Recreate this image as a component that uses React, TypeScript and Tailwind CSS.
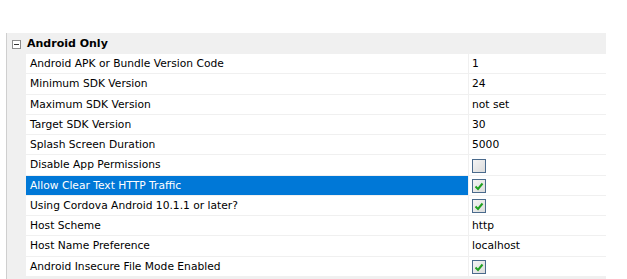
import React from 'react';

type Row = { label: string; value?: string; check?: boolean };

const rows: Row[] = [
  { label: 'Android APK or Bundle Version Code', value: '1' },
  { label: 'Minimum SDK Version', value: '24' },
  { label: 'Maximum SDK Version', value: 'not set' },
  { label: 'Target SDK Version', value: '30' },
  { label: 'Splash Screen Duration', value: '5000' },
  { label: 'Disable App Permissions', check: false },
  { label: 'Allow Clear Text HTTP Traffic', check: true },
  { label: 'Using Cordova Android 10.1.1 or later?', check: true },
  { label: 'Host Scheme', value: 'http' },
  { label: 'Host Name Preference', value: 'localhost' },
  { label: 'Android Insecure File Mode Enabled', check: true },
];

const Check = ({ on }: { on: boolean }) => (
  <div className="w-[14px] h-[14px] border border-[#4a6a8c] bg-gradient-to-br from-[#f4f4f4] to-[#dcdcdc] flex items-center justify-center">
    {on && (
      <svg width="10" height="9" viewBox="0 0 10 9">
        <path d="M1.5 4.5 L4 7 L8.5 1.5" fill="none" stroke="#21a121" strokeWidth="2" />
      </svg>
    )}
  </div>
);

export default function App() {
  return (
    <div className="w-[627px] h-[279px] bg-white overflow-hidden pt-[33px] pl-[6px] text-[10.7px] text-black" style={{ fontFamily: 'Tahoma, "DejaVu Sans", sans-serif' }}>
      <div className="w-[600px] border-l border-[#cfcfcf] bg-[#f0f0f0]">
        <div className="h-[21px] flex items-center pt-[1px]">
          <div className="w-[19px] flex justify-center">
            <div className="w-[9px] h-[9px] border border-[#8c8c8c] bg-white flex items-center justify-center">
              <div className="w-[5px] h-px bg-[#333]" />
            </div>
          </div>
          <span className="font-bold text-[11px] pl-[1px]">Android Only</span>
        </div>
        {rows.map((r, i) => {
          const sel = i === 6;
          return (
            <div key={i} className={`${i % 4 === 1 ? 'h-[21px]' : 'h-[20px]'} flex ml-[19px]`}>
              <div className={`w-[442px] flex items-center pl-[4px] pt-[1px] border-b border-[#f0f0f0] ${sel ? 'bg-[#0078d7] text-white' : 'bg-white'}`}>
                {r.label}
              </div>
              <div className="flex-1 flex items-center pl-[3px] pt-[1px] bg-white border-b border-l border-[#f0f0f0]">
                {r.check !== undefined ? <Check on={r.check} /> : r.value}
              </div>
            </div>
          );
        })}
        <div className="h-[10px]" />
      </div>
    </div>
  );
}
